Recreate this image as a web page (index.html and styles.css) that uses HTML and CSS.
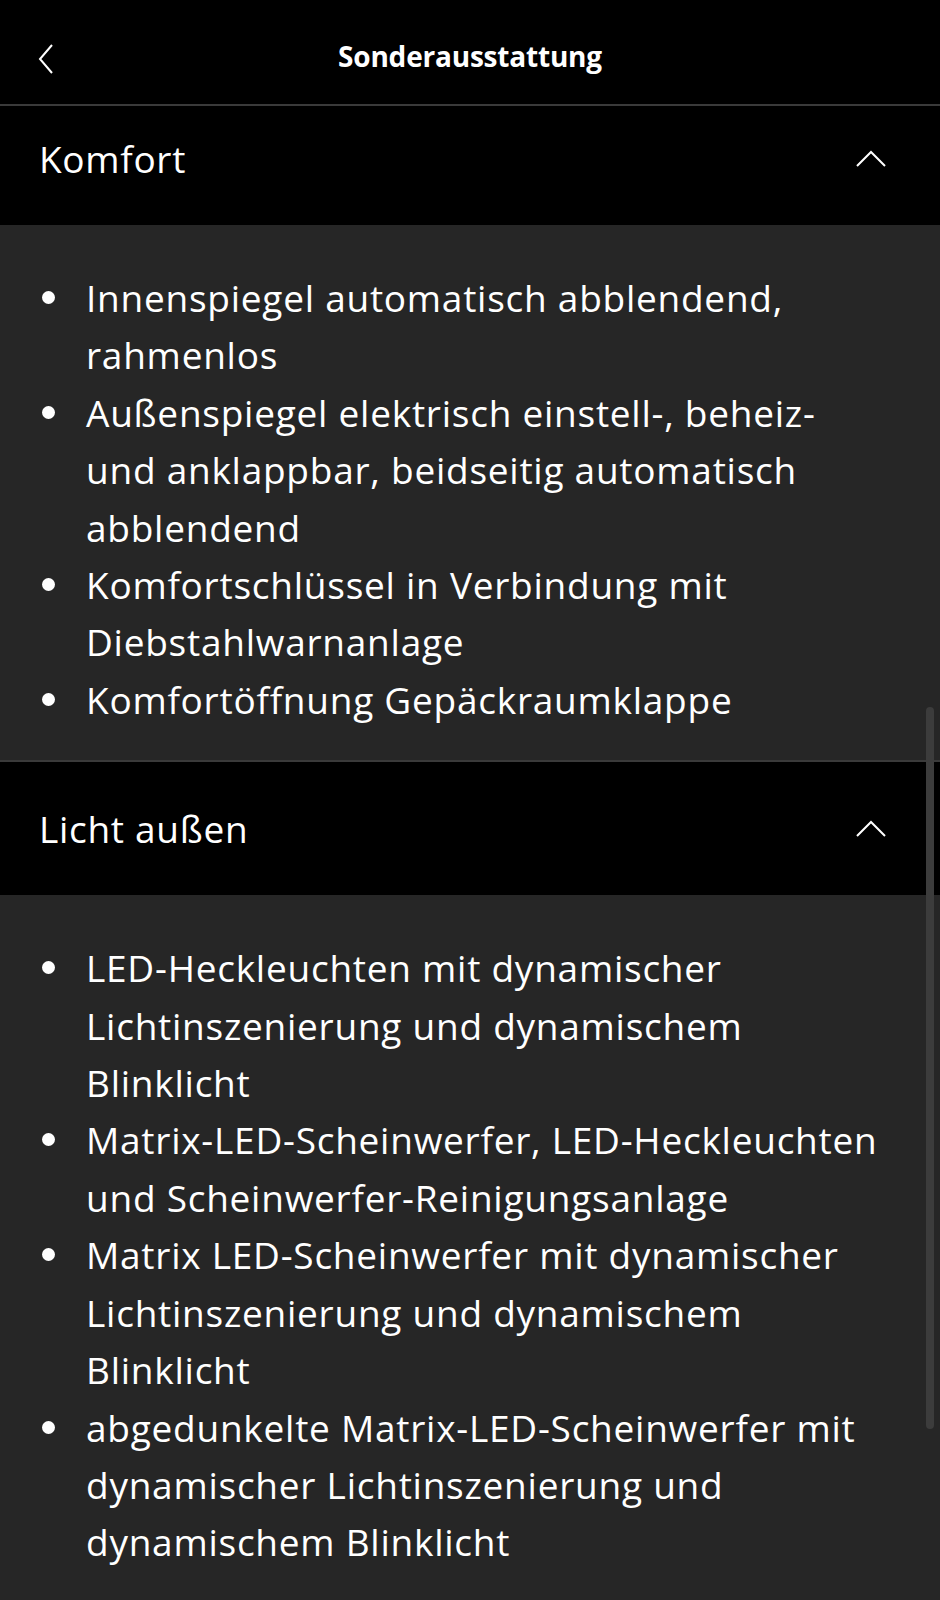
FILE: index.html
```html
<!DOCTYPE html>
<html lang="de">
<head>
<meta charset="utf-8">
<title>Sonderausstattung</title>
<link rel="stylesheet" href="styles.css">
</head>
<body>
<div class="screen">
  <div class="nav">
    <span class="nav-back">
      <svg width="16" height="30" viewBox="0 0 16 30"><path d="M14 1 L2 15 L14 29" fill="none" stroke="#fff" stroke-width="2"/></svg>
    </span>
    <span class="nav-title">Sonderausstattung</span>
  </div>

  <div class="group-head first">
    <span class="group-title">Komfort</span>
    <svg class="chevron" width="30" height="17" viewBox="0 0 30 17"><path d="M1 16 L15 2 L29 16" fill="none" stroke="#fff" stroke-width="2"/></svg>
  </div>
  <ul class="group-list">
    <li>Innenspiegel automatisch abblendend,<br>rahmenlos</li>
    <li>Außenspiegel elektrisch einstell-, beheiz-<br>und anklappbar, beidseitig automatisch<br>abblendend</li>
    <li>Komfortschlüssel in Verbindung mit<br>Diebstahlwarnanlage</li>
    <li>Komfortöffnung Gepäckraumklappe</li>
  </ul>

  <div class="group-head">
    <span class="group-title">Licht außen</span>
    <svg class="chevron" width="30" height="17" viewBox="0 0 30 17"><path d="M1 16 L15 2 L29 16" fill="none" stroke="#fff" stroke-width="2"/></svg>
  </div>
  <ul class="group-list">
    <li>LED-Heckleuchten mit dynamischer<br>Lichtinszenierung und dynamischem<br>Blinklicht</li>
    <li>Matrix-LED-Scheinwerfer, LED-Heckleuchten<br>und Scheinwerfer-Reinigungsanlage</li>
    <li>Matrix LED-Scheinwerfer mit dynamischer<br>Lichtinszenierung und dynamischem<br>Blinklicht</li>
    <li>abgedunkelte Matrix-LED-Scheinwerfer mit<br>dynamischer Lichtinszenierung und<br>dynamischem Blinklicht</li>
  </ul>

  <div class="scrollbar"></div>
</div>
</body>
</html>
```

FILE: styles.css
```css
html, body {
  margin: 0;
  padding: 0;
  background: #262626;
}
.screen {
  position: relative;
  width: 940px;
  min-height: 1600px;
  overflow: hidden;
  font-family: "Open Sans", "Noto Sans", sans-serif;
  color: #fff;
  background: #262626;
}
.nav {
  height: 104px;
  background: #000;
  border-bottom: 2px solid #3a3a3a;
  display: flex;
  align-items: center;
  justify-content: center;
  position: relative;
}
.nav-back {
  position: absolute;
  left: 38px;
  top: 44px;
  line-height: 0;
}
.nav-title {
  font-size: 28px;
  font-weight: 700;
  letter-spacing: -0.2px;
  padding-top: 8px;
}
.group-head {
  background: #000;
  height: 133px;
  display: flex;
  align-items: center;
  justify-content: space-between;
  padding: 0 54px 0 39px;
  border-top: 2px solid #3a3a3a;
}
.group-head.first {
  border-top: none;
  padding-bottom: 14px;
  height: 105px;
}
.group-title {
  font-size: 37px;
  letter-spacing: 0.7px;
}
.chevron {
  display: block;
}
.group-list {
  list-style: none;
  margin: 0;
  padding: 44px 0 32px 86px;
}
.group-list li {
  position: relative;
  font-size: 37px;
  letter-spacing: 0.75px;
  line-height: 57.4px;
  white-space: nowrap;
}
.group-list li::before {
  content: "";
  position: absolute;
  left: -44px;
  top: 22px;
  width: 13px;
  height: 13px;
  border-radius: 50%;
  background: #fff;
}
.scrollbar {
  position: absolute;
  right: 6px;
  top: 707px;
  width: 8px;
  height: 722px;
  border-radius: 4px;
  background: #3c3c3c;
}
```
